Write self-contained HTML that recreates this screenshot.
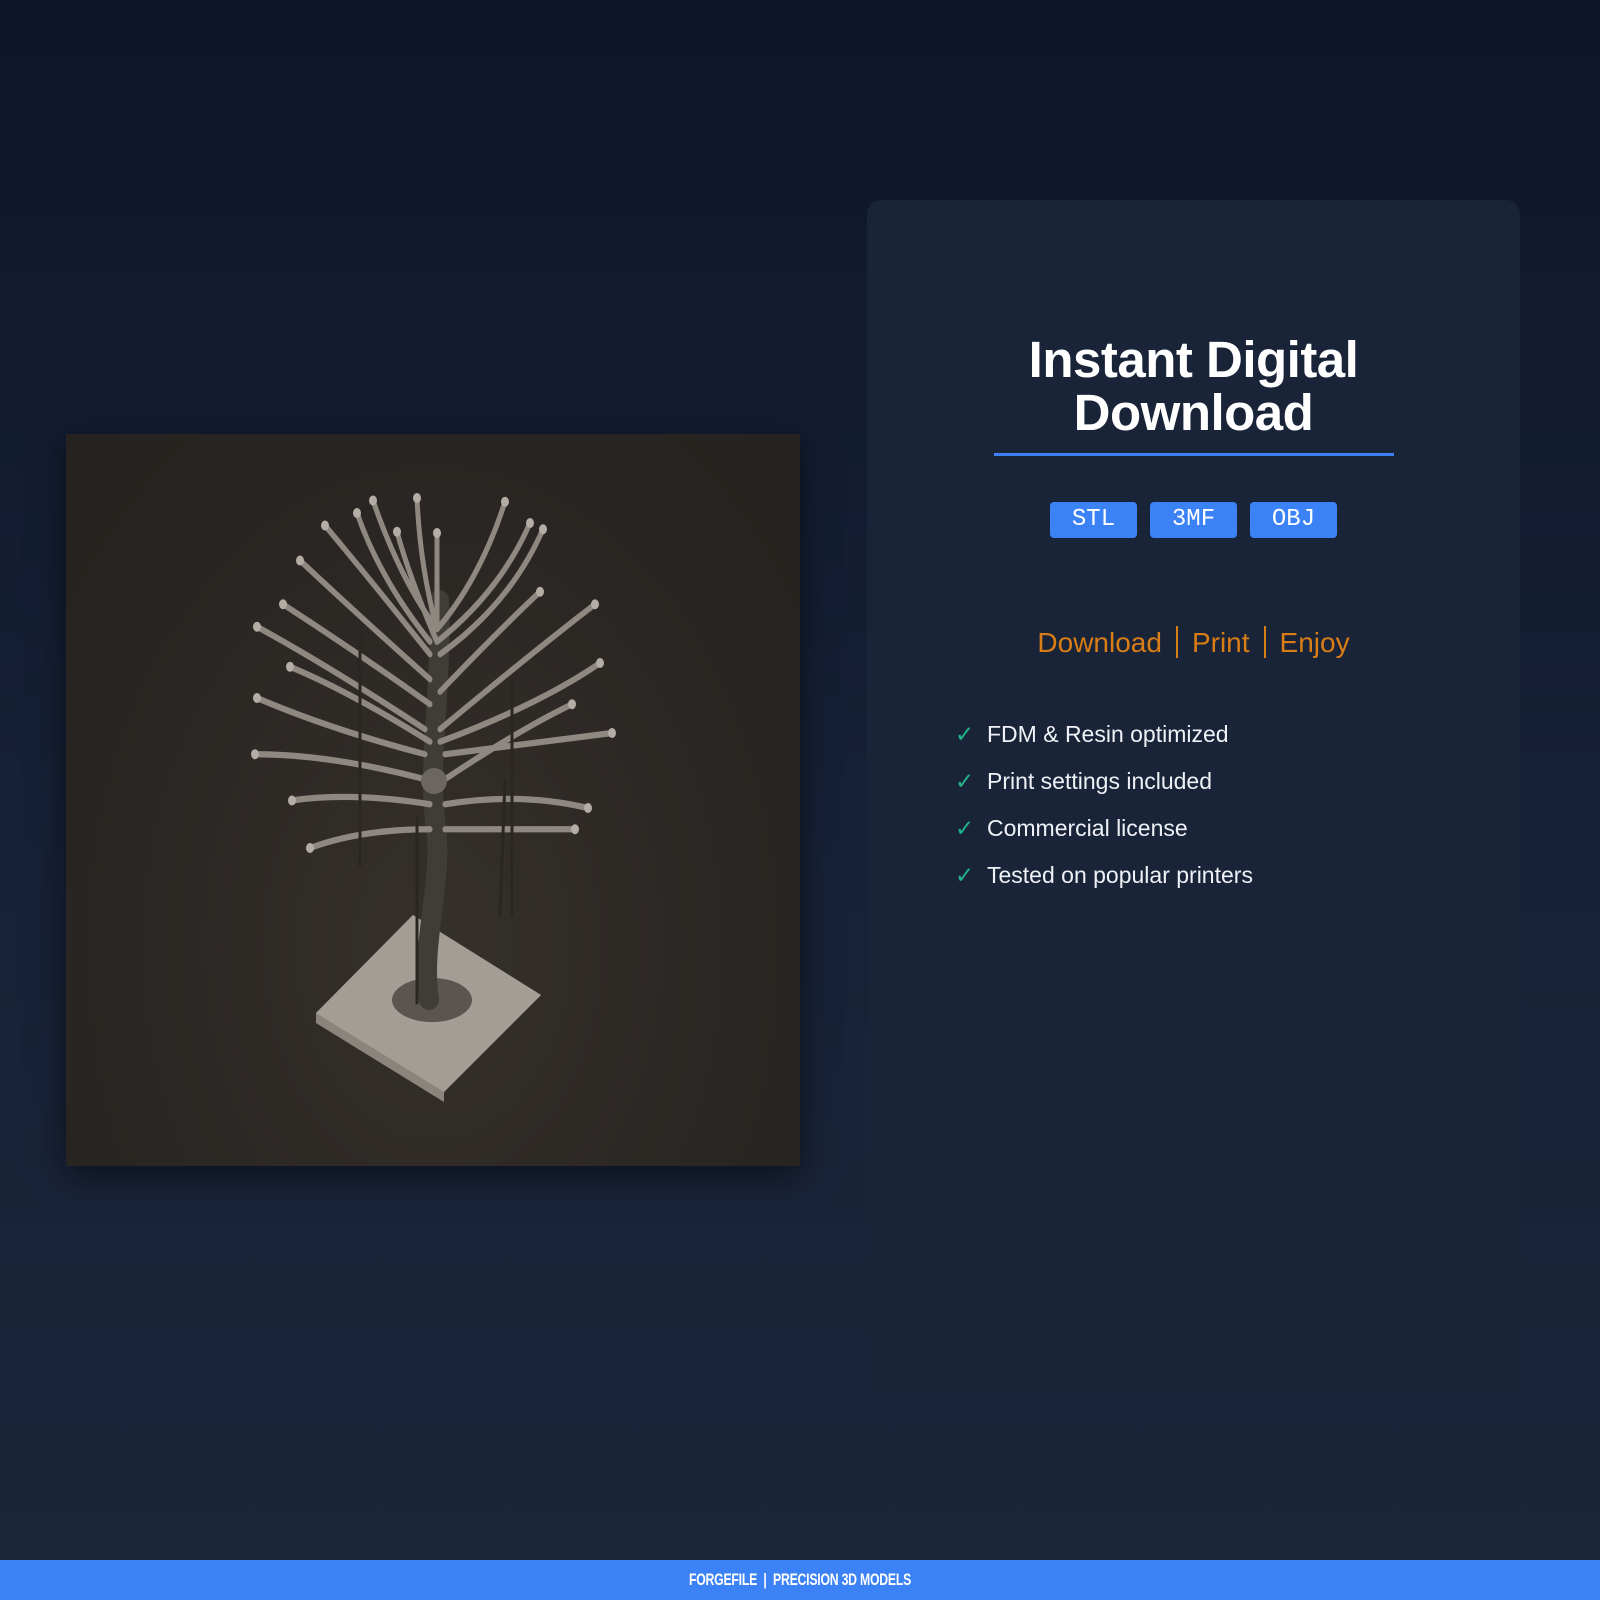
<!DOCTYPE html>
<html><head><meta charset="utf-8"><style>
*{margin:0;padding:0;box-sizing:border-box}
body{width:1600px;height:1600px;overflow:hidden;background:linear-gradient(180deg,#0e1629 0%,#162036 50%,#1c263b 100%);font-family:"Liberation Sans",sans-serif;position:relative}
.card{position:absolute;left:867px;top:200px;width:653px;height:1198px;background:#1a2438;border-radius:14px}
.img{position:absolute;left:66px;top:434px;width:734px;height:732px;background:radial-gradient(ellipse at 50% 70%,#35302b 0%,#2a2623 60%,#25221f 100%);box-shadow:0 10px 30px rgba(0,0,0,.5)}
.title{position:absolute;left:867px;width:653px;top:333px;text-align:center;color:#fff;font-weight:bold;font-size:51px;line-height:53px;letter-spacing:-0.5px}
.line{position:absolute;left:994px;top:453px;width:400px;height:3px;background:#3b82f6}
.badge{position:absolute;top:502px;width:87px;height:36px;background:#3b82f6;border-radius:4px;color:#fff;font-family:"Liberation Mono",monospace;font-size:24px;line-height:36px;text-align:center}
.steps{position:absolute;left:867px;width:653px;top:624px;text-align:center;color:#d97d16;font-size:28px;line-height:38px}
.steps span{display:inline-block;width:2px;height:32px;background:#d97d16;vertical-align:-6px;margin:0 14px}
.feat{position:absolute;left:955px;font-size:23px;color:#eef1f6;line-height:30px}
.feat b{color:#21b38a;font-weight:normal;margin-right:10px;display:inline-block;width:22px}
.foot{position:absolute;left:0;top:1560px;width:1600px;height:40px;background:#3b82f6}
.foot div{width:1600px;text-align:center;color:#fff;font-weight:bold;font-size:17px;line-height:40px;transform:scaleX(0.72);letter-spacing:-0.3px}
</style></head><body>
<div class="card"></div>
<div class="img">
<svg width="734" height="732" viewBox="66 434 734 732" style="position:absolute;left:0;top:0">
<polygon points="316,1013 413,915 541,995 444,1092 444,1102 316,1023" fill="#8a847c"/>
<polygon points="316,1013 413,915 541,995 444,1092" fill="#a39d95"/>
<ellipse cx="432" cy="1000" rx="40" ry="22" fill="#5a5550"/>
<path d="M429,1000 C420,940 445,880 435,820 C428,760 442,690 439,600" fill="none" stroke="#403c38" stroke-width="20" stroke-linecap="round"/>
<g transform="translate(0,498) scale(1,1.25) translate(0,-495)">
<g fill="none" stroke="#8e8881" stroke-linecap="round">
<path d="M437,600 Q400,560 373,497 M437,600 Q420,550 417,495 M437,600 Q480,560 505,498 M437,610 Q500,570 530,515 M440,620 Q510,580 543,520 M430,620 Q370,560 325,517 M430,610 Q380,560 357,507 M430,640 Q360,590 300,545 M430,660 Q360,620 283,580 M425,680 Q330,630 257,598 M430,690 Q350,650 290,630 M425,700 Q330,680 257,655 M425,720 Q330,700 255,700 M430,740 Q350,730 292,737 M430,760 Q360,760 310,775 M440,680 Q530,620 595,580 M440,690 Q540,660 600,627 M445,700 Q540,690 612,683 M445,740 Q520,730 588,743 M445,760 Q520,760 575,760 M440,650 Q500,600 540,570 M437,600 Q437,560 437,523 M437,610 Q410,560 397,522 M445,720 Q520,680 572,660" stroke-width="5"/>
</g>
<g fill="#b3ada6">
<circle cx="373" cy="497" r="4"/><circle cx="417" cy="495" r="4"/><circle cx="505" cy="498" r="4"/><circle cx="530" cy="515" r="4"/><circle cx="543" cy="520" r="4"/><circle cx="325" cy="517" r="4"/><circle cx="357" cy="507" r="4"/><circle cx="300" cy="545" r="4"/><circle cx="283" cy="580" r="4"/><circle cx="257" cy="598" r="4"/><circle cx="290" cy="630" r="4"/><circle cx="257" cy="655" r="4"/><circle cx="255" cy="700" r="4"/><circle cx="292" cy="737" r="4"/><circle cx="310" cy="775" r="4"/><circle cx="595" cy="580" r="4"/><circle cx="600" cy="627" r="4"/><circle cx="612" cy="683" r="4"/><circle cx="588" cy="743" r="4"/><circle cx="575" cy="760" r="4"/><circle cx="540" cy="570" r="4"/><circle cx="437" cy="523" r="4"/><circle cx="397" cy="522" r="4"/><circle cx="572" cy="660" r="4"/>
</g>
<g stroke="#2a2622" stroke-width="3"><line x1="360" y1="600" x2="360" y2="790"/><line x1="512" y1="640" x2="512" y2="830"/><line x1="417" y1="750" x2="417" y2="900"/><line x1="505" y1="720" x2="500" y2="830"/></g>
</g>
<circle cx="434" cy="781" r="13" fill="#6b665f"/>
</svg>
</div>
<div class="title">Instant Digital<br>Download</div>
<div class="line"></div>
<div class="badge" style="left:1050px">STL</div>
<div class="badge" style="left:1150px">3MF</div>
<div class="badge" style="left:1250px">OBJ</div>
<div class="steps">Download<span></span>Print<span></span>Enjoy</div>
<div class="feat" style="top:719px"><b>✓</b>FDM &amp; Resin optimized</div>
<div class="feat" style="top:766px"><b>✓</b>Print settings included</div>
<div class="feat" style="top:813px"><b>✓</b>Commercial license</div>
<div class="feat" style="top:860px"><b>✓</b>Tested on popular printers</div>
<div class="foot"><div>FORGEFILE &nbsp;|&nbsp; PRECISION 3D MODELS</div></div>
</body></html>
